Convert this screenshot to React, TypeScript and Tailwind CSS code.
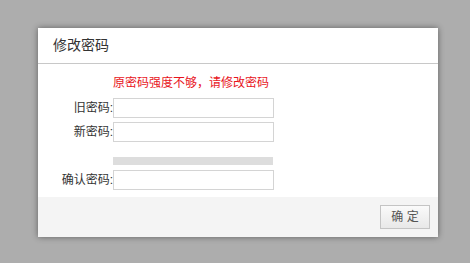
import React from 'react';

const FONT = { fontFamily: '"Liberation Sans", "Noto Sans CJK SC", sans-serif' };

function Field({ label }: { label: string }) {
  return (
    <div className="flex items-center h-[20px]">
      <span className="w-[75px] text-right text-[12px] leading-[20px] text-[#333]">{label}</span>
      <input
        type="password"
        className="w-[161px] h-[20px] border border-[#d4d4d4] bg-white outline-none"
      />
    </div>
  );
}

export default function App() {
  return (
    <div className="w-[470px] h-[263px] bg-[#adadad] pt-[28px] pl-[38px]" style={FONT}>
      <div className="w-[400px] bg-white shadow-[0_0_6px_rgba(0,0,0,0.45)]">
        <div className="h-[36px] px-[15px] flex items-center border-b border-[#c8c8c8]">
          <span className="text-[14px] text-[#333]">修改密码</span>
        </div>
        <div className="pt-[11px] pb-[7px]">
          <div className="pl-[75px] h-[16px] text-[12px] leading-[16px] text-[#e8141c]">
            原密码强度不够，请修改密码
          </div>
          <div className="mt-[7px] flex flex-col gap-[4px]">
            <Field label="旧密码:" />
            <Field label="新密码:" />
          </div>
          <div className="ml-[75px] mt-[15px] w-[160px] h-[8px] bg-[#dddddd]" />
          <div className="mt-[5px]">
            <Field label="确认密码:" />
          </div>
        </div>
        <div className="h-[40px] bg-[#f4f4f4] flex items-start justify-end pt-[8px] pr-[8px]">
          <button className="w-[50px] h-[24px] border border-[#c4c4c4] bg-gradient-to-b from-[#fafafa] to-[#e8e8e8] text-[12px] text-[#555]">
            确 定
          </button>
        </div>
      </div>
    </div>
  );
}
